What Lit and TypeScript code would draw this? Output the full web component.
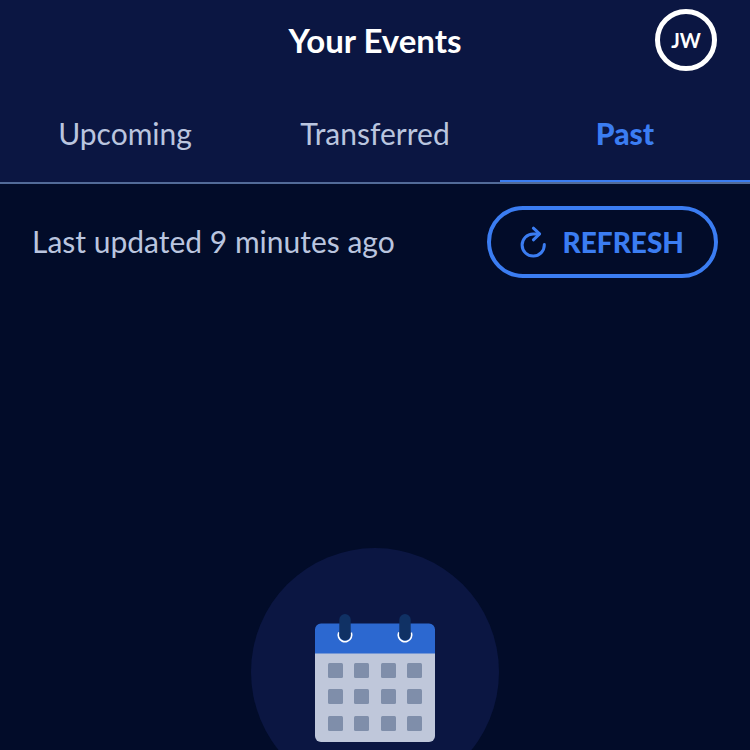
import { LitElement, html, css, svg } from "lit";
import { customElement, state } from "lit/decorators.js";

@customElement("event-calendar-art")
class EventCalendarArt extends LitElement {
  static styles = css`
    :host {
      display: grid;
      box-sizing: border-box;
      place-items: center;
      width: 248px;
      height: 248px;
      padding-top: 12px;
      flex: none;
      border-radius: 50%;
      background: #0b1642;
    }
    .art {
      display: block;
      width: 120px;
      height: 128px;
    }
  `;

  render() {
    const columns = [13, 39, 66, 92];
    const rows = [49, 75, 102];
    return html`
      <svg class="art" viewBox="0 0 120 128" aria-hidden="true">
        <path d="M0 39H120V122a6 6 0 0 1 -6 6H6a6 6 0 0 1 -6 -6Z" fill="#bfc7da" />
        <path d="M0 39.5V15.5a6 6 0 0 1 6-6H114a6 6 0 0 1 6 6V39.5Z" fill="#2c68d0" />
        ${rows.map((y) => columns.map((x) => svg`
          <rect x=${x} y=${y} width="15" height="15" rx="1.5" fill="#7f8eaa" />
        `))}
        ${[30, 90].map((x) => svg`
          <circle cx=${x} cy="21" r="6.7" fill="none" stroke="#ffffff" stroke-width="1.7"
            stroke-dasharray="26 17" transform=${`rotate(-21 ${x} 21)`} />
          <rect x=${x - 5.7} y="0" width="11.4" height="26.5" rx="5.7" fill="#103164" />
        `)}
      </svg>
    `;
  }
}

@customElement("app-root")
class AppRoot extends LitElement {
  static styles = css`
    :host {
      display: flex;
      flex-direction: column;
      height: 100vh;
      overflow: hidden;
      background: #020c29;
      color: #bac5df;
      font-family: Lato, "Open Sans", sans-serif;
      font-size: 30px;
      line-height: 36px;
    }
    * {
      box-sizing: border-box;
    }
    button {
      margin: 0;
      padding: 0;
      border: 0;
      background: none;
      color: inherit;
      font: inherit;
      cursor: pointer;
    }
    .top {
      flex: none;
      background: #0b1642;
      border-bottom: 2px solid #526b98;
    }
    .bar {
      display: grid;
      grid-template-columns: 1fr auto 1fr;
      align-items: center;
      height: 80px;
      padding: 0 33px;
    }
    .title {
      grid-column: 2;
      margin: 0;
      color: #ffffff;
      font-size: 33px;
      font-weight: 700;
      line-height: 40px;
    }
    .avatar {
      justify-self: end;
      width: 62px;
      height: 62px;
      border: 5px solid #ffffff;
      border-radius: 50%;
      color: #ffffff;
      font-size: 20px;
      font-weight: 700;
    }
    .tabs {
      display: grid;
      grid-template-columns: repeat(3, 1fr);
    }
    .tab {
      height: 102px;
      padding-top: 6px;
      border-bottom: 2px solid transparent;
    }
    .tab[aria-selected="true"] {
      border-color: #3b7df2;
      color: #3b7df2;
      font-weight: 900;
    }
    .status {
      display: flex;
      flex: none;
      align-items: center;
      justify-content: space-between;
      padding: 22px 32px;
    }
    .updated {
      margin: 0;
      padding-bottom: 2px;
    }
    .refresh {
      display: flex;
      align-items: center;
      justify-content: center;
      gap: 16px;
      height: 72px;
      padding: 0 30px 0 28px;
      border: 4px solid #3b7df2;
      border-radius: 36px;
      color: #3b7df2;
      font-size: 28px;
      font-weight: 900;
    }
    .refresh-icon {
      width: 28px;
      height: 32px;
    }
    .empty {
      display: flex;
      flex: 1;
      justify-content: center;
      min-height: 0;
      padding-top: 248px;
    }
  `;

  @state() private selected = "Past";

  render() {
    return html`
      <header class="top">
        <div class="bar">
          <h1 class="title">Your Events</h1>
          <button class="avatar" type="button">JW</button>
        </div>
        <div class="tabs" role="tablist">
          ${["Upcoming", "Transferred", "Past"].map((name) => html`
            <button
              class="tab"
              type="button"
              role="tab"
              aria-selected=${this.selected === name ? "true" : "false"}
              @click=${() => (this.selected = name)}
            >${name}</button>
          `)}
        </div>
      </header>
      <section class="status">
        <p class="updated">Last updated 9 minutes ago</p>
        <button class="refresh" type="button">
          <svg class="refresh-icon" viewBox="0 0 28 32" fill="none" stroke="#3b7df2"
            stroke-width="3" stroke-linecap="round" stroke-linejoin="round" aria-hidden="true">
            <path d="M25.3 18.6A11.1 11.1 0 1 1 14.2 7.9H20" />
            <path d="M14.4 2.2L20.6 7.9L14.4 13.8" />
          </svg>
          <span>REFRESH</span>
        </button>
      </section>
      <main class="empty">
        <event-calendar-art></event-calendar-art>
      </main>
    `;
  }
}
